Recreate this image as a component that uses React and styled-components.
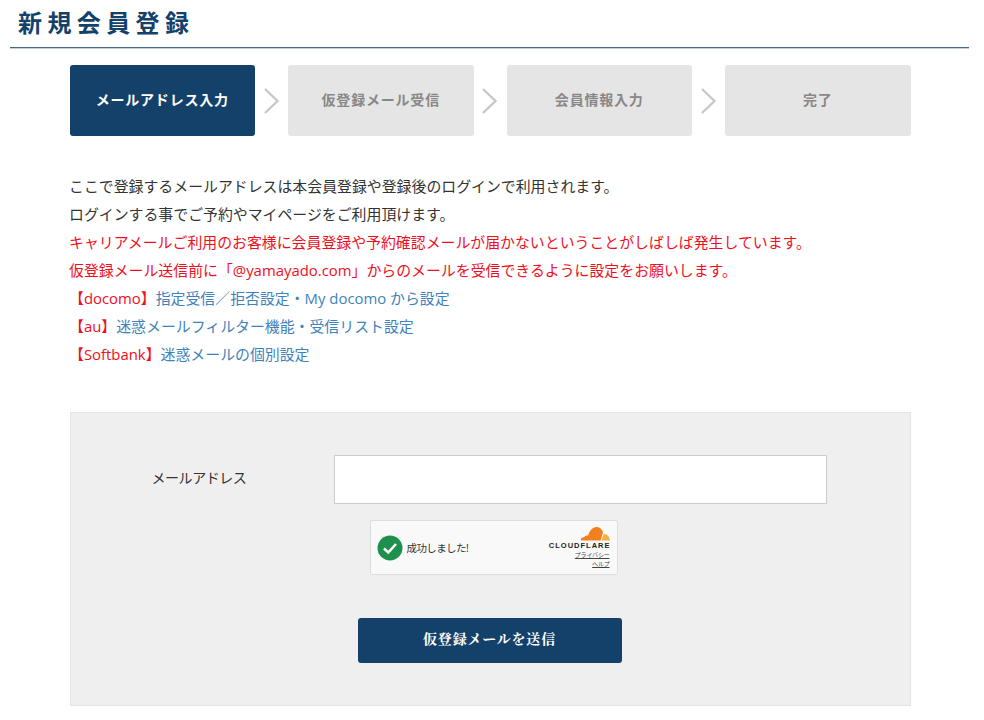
import styled, { createGlobalStyle } from "styled-components"

const GlobalStyle = createGlobalStyle`
    html, body {
        margin: 0;
        padding: 0;
        background: #fff;
    }
    body {
        font-family: "Open Sans", "Noto Sans CJK JP", sans-serif;
        color: #333;
    }
`

const Page = styled.div`
    width: 984px;
    height: 720px;
    overflow: hidden;
    padding: 0 15px 0 10px;
    box-sizing: border-box;
`
const Title = styled.h1`
    margin: 0;
    padding: 4px 0 0 8px;
    height: 43px;
    border-bottom: 1px solid #46698c;
    box-shadow: 0 1px 0 #c3d0dc;
    color: #14416a;
    font-family: "Noto Sans CJK JP", sans-serif;
    font-size: 24px;
    font-weight: 700;
    line-height: 36px;
    letter-spacing: 5.4px;
`
const Content = styled.div`
    width: 841px;
    margin-left: 59.5px;
`
const Steps = styled.div`
    display: flex;
    justify-content: space-between;
    align-items: center;
    margin-top: 17px;
`
const Step = styled.div`
    width: 185.5px;
    height: 71px;
    padding-bottom: 3px;
    display: flex;
    align-items: center;
    justify-content: center;
    box-sizing: border-box;
    border-radius: 3px;
    background: ${(p) => (p.$active ? "#14416a" : "#e5e5e5")};
    color: ${(p) => (p.$active ? "#fff" : "#888")};
    font-family: "Noto Sans CJK JP", sans-serif;
    font-size: 14px;
    font-weight: 700;
    letter-spacing: 0.8px;
`
const Arrow = styled.svg`
    width: 16px;
    height: 26px;
    flex: none;
`
const Intro = styled.div`
    margin: 36px 0 0 -0.5px;
    font-family: "Open Sans", "Noto Sans CJK JP", sans-serif;
    font-size: 14.9px;
    line-height: 28px;
`
const Line = styled.div`
    color: ${(p) => (p.$red ? "#f00e1e" : "#333")};
    white-space: nowrap;
`
const Link = styled.a`
    color: #3f82ba;
    text-decoration: none;
`
const FormPanel = styled.div`
    margin-top: 44px;
    height: 294px;
    box-sizing: border-box;
    border: 1px solid #e3e3e3;
    background: #efefef;
    padding-top: 42px;
    display: flex;
    flex-direction: column;
`
const Row = styled.div`
    display: flex;
    align-items: center;
`
const Label = styled.label`
    width: 263px;
    padding: 0 0 5px 81px;
    box-sizing: border-box;
    font-size: 14px;
    color: #333;
    letter-spacing: -0.45px;
`
const Input = styled.input`
    width: 493px;
    height: 49px;
    box-sizing: border-box;
    border: 1px solid #ccc;
    background: #fff;
    outline: none;
`
const Widget = styled.div`
    align-self: flex-start;
    width: 248px;
    height: 55px;
    margin: 16px 0 0 299px;
    box-sizing: border-box;
    border: 1px solid #dedede;
    border-radius: 2px;
    background: #f9f9f9;
    padding: 0 7px 0 6px;
    display: flex;
    align-items: center;
    justify-content: space-between;
`
const WidgetStatus = styled.div`
    display: flex;
    align-items: center;
    gap: 4px;
    font-size: 10.5px;
    letter-spacing: -0.6px;
    color: #333;
`
const Brand = styled.div`
    display: flex;
    flex-direction: column;
    align-items: flex-end;
`
const BrandName = styled.div`
    font-family: "Liberation Sans", sans-serif;
    font-size: 7.5px;
    font-weight: 700;
    letter-spacing: 1px;
    margin: 1px -1px 1px 0;
    line-height: 8px;
    color: #1d1f20;
`
const BrandLink = styled.a`
    font-size: 6px;
    line-height: 9px;
    color: #444;
    text-decoration: underline;
    letter-spacing: -0.2px;
`
const Submit = styled.button`
    align-self: flex-start;
    width: 264px;
    height: 45px;
    margin: 43px 0 0 287px;
    padding: 0 0 5px;
    border: none;
    border-radius: 3px;
    background: #14416a;
    color: #fff;
    font-family: "Noto Serif CJK JP", "Noto Sans CJK JP", serif;
    font-size: 14px;
    font-weight: 700;
    letter-spacing: 0.8px;
`

const StepArrow = () => (
    <Arrow viewBox="0 0 16 26">
        <path d="M1 1 L13.5 13 L1 25" fill="none" stroke="#c8c8c8" strokeWidth="2.4" />
    </Arrow>
)

const CheckBadge = () => (
    <svg width="26" height="26" viewBox="0 0 26 26">
        <circle cx="13" cy="13" r="12.5" fill="#1f8f4e" />
        <path d="M7 13.5 L11.3 17.5 L19 9" fill="none" stroke="#fff" strokeWidth="2.6" />
    </svg>
)

const CloudLogo = () => (
    <svg width="30" height="15" viewBox="0 0 30 15">
        <path d="M1 14.5 C0.3 12.3 2 10.8 4 11.2 C5 9.7 7 9.2 8 9.8 C9.5 3.5 14 0.6 17 1 C20 1.4 22.5 3.6 23 6.6 L20.6 14.5 Z" fill="#f38020" />
        <path d="M21.6 14.5 L23.6 8 C26.6 7.5 29.6 10.6 30 14.5 Z" fill="#faae40" />
    </svg>
)

const App = () => {
    return (
        <Page>
            <GlobalStyle />
            <Title>新規会員登録</Title>
            <Content>
                <Steps>
                    <Step $active>メールアドレス入力</Step>
                    <StepArrow />
                    <Step>仮登録メール受信</Step>
                    <StepArrow />
                    <Step>会員情報入力</Step>
                    <StepArrow />
                    <Step>完了</Step>
                </Steps>
                <Intro>
                    <Line>ここで登録するメールアドレスは本会員登録や登録後のログインで利用されます。</Line>
                    <Line>ログインする事でご予約やマイページをご利用頂けます。</Line>
                    <Line $red>キャリアメールご利用のお客様に会員登録や予約確認メールが届かないということがしばしば発生しています。</Line>
                    <Line $red>仮登録メール送信前に「@yamayado.com」からのメールを受信できるように設定をお願いします。</Line>
                    <Line $red>【docomo】<Link href="#">指定受信／拒否設定・My docomo から設定</Link></Line>
                    <Line $red>【au】<Link href="#">迷惑メールフィルター機能・受信リスト設定</Link></Line>
                    <Line $red>【Softbank】<Link href="#">迷惑メールの個別設定</Link></Line>
                </Intro>
                <FormPanel>
                    <Row>
                        <Label>メールアドレス</Label>
                        <Input type="text" />
                    </Row>
                    <Widget>
                        <WidgetStatus>
                            <CheckBadge />
                            成功しました!
                        </WidgetStatus>
                        <Brand>
                            <CloudLogo />
                            <BrandName>CLOUDFLARE</BrandName>
                            <BrandLink href="#">プライバシー</BrandLink>
                            <BrandLink href="#">ヘルプ</BrandLink>
                        </Brand>
                    </Widget>
                    <Submit type="button">仮登録メールを送信</Submit>
                </FormPanel>
            </Content>
        </Page>
    )
}
export default App
